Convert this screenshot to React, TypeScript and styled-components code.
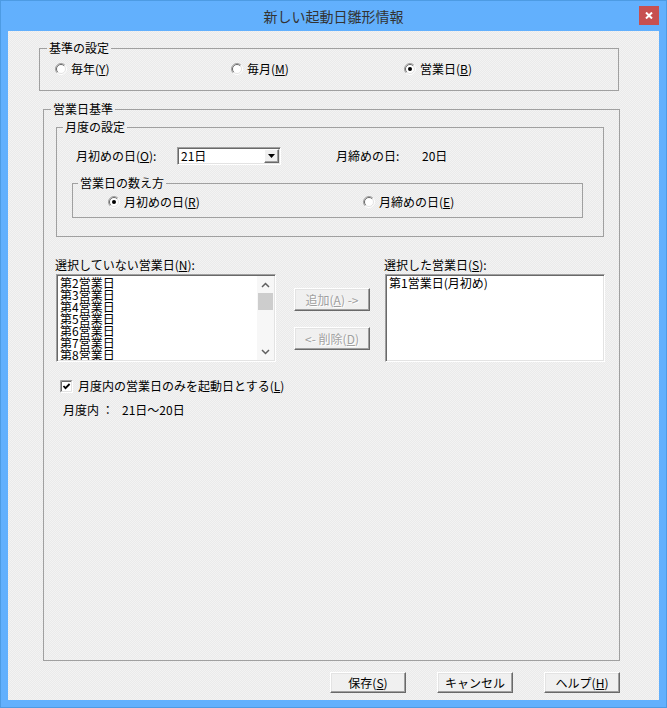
import React from 'react';
import styled, { createGlobalStyle } from 'styled-components';

const FONT = `"Noto Sans CJK JP", "Noto Sans", sans-serif`;

const GlobalStyle = createGlobalStyle`
  html, body {
    margin: 0;
    padding: 0;
    background: #ffffff;
  }
  body {
    font-family: ${FONT};
    font-size: 12px;
    color: #000000;
  }
  * {
    box-sizing: border-box;
  }
`;

const Radio = ({ checked }: { checked?: boolean }) => (
  <svg width="12" height="12" viewBox="0 0 12 12" style={{ flex: 'none' }}>
    <circle cx="6" cy="6" r="5" fill="#ffffff" />
    <path d="M2.1 9.9 A5.5 5.5 0 0 1 9.9 2.1" stroke="#a0a0a0" fill="none" />
    <path d="M9.9 2.1 A5.5 5.5 0 0 1 2.1 9.9" stroke="#ffffff" fill="none" />
    <path d="M2.8 9.2 A4.5 4.5 0 0 1 9.2 2.8" stroke="#696969" fill="none" />
    <path d="M9.2 2.8 A4.5 4.5 0 0 1 2.8 9.2" stroke="#e3e3e3" fill="none" />
    {checked && <circle cx="6" cy="6" r="2" fill="#000000" />}
  </svg>
);

const Check = () => (
  <svg width="13" height="13" viewBox="0 0 13 13" style={{ flex: 'none' }}>
    <rect x="0" y="0" width="13" height="13" fill="#ffffff" />
    <path d="M0.5 12.5 V0.5 H12.5" stroke="#a0a0a0" fill="none" />
    <path d="M12.5 0.5 V12.5 H0.5" stroke="#ffffff" fill="none" />
    <path d="M1.5 11.5 V1.5 H11.5" stroke="#696969" fill="none" />
    <path d="M11.5 1.5 V11.5 H1.5" stroke="#e3e3e3" fill="none" />
    <path d="M3.5 6 L5.5 8.2 L9.6 4" stroke="#000000" strokeWidth="1.8" fill="none" />
  </svg>
);

const Chevron = ({ up }: { up?: boolean }) => (
  <svg width="9" height="6" viewBox="0 0 9 6">
    <path
      d={up ? 'M1 5 L4.5 1.5 L8 5' : 'M1 1 L4.5 4.5 L8 1'}
      stroke="#606060"
      strokeWidth="1.5"
      fill="none"
    />
  </svg>
);

const App = () => {
  const pending = ['第2営業日', '第3営業日', '第4営業日', '第5営業日', '第6営業日', '第7営業日', '第8営業日', '第9営業日'];
  return (
    <>
      <GlobalStyle />
      <Window>
        <TitleBar>
          <Title>新しい起動日雛形情報</Title>
          <CloseButton>
            <svg width="8" height="7" viewBox="0 0 8 7">
              <path d="M1 0.5 L7 6.5 M7 0.5 L1 6.5" stroke="#ffffff" strokeWidth="2" />
            </svg>
          </CloseButton>
        </TitleBar>
        <Client>
          <Group $top={10} $left={31} $width={580} $pb={14}>
            <Legend $offset={7}>基準の設定</Legend>
            <OptionRow $top={7} $left={15}>
              <Option $width={176}>
                <Radio />
                <span>毎年(<Key>Y</Key>)</span>
              </Option>
              <Option $width={173}>
                <Radio />
                <span>毎月(<Key>M</Key>)</span>
              </Option>
              <Option>
                <Radio checked />
                <span>営業日(<Key>B</Key>)</span>
              </Option>
            </OptionRow>
          </Group>

          <Group $top={11} $left={35} $width={577} $pb={243}>
            <Legend $offset={7}>営業日基準</Legend>
            <Group $top={4} $left={12} $width={548} $pb={18}>
              <Legend $offset={6}>月度の設定</Legend>
              <FieldRow>
                <FieldLabel $width={101}>
                  月初めの日(<Key>O</Key>):
                </FieldLabel>
                <Combo>
                  <ComboText>21日</ComboText>
                  <ComboButton>
                    <svg width="7" height="4" viewBox="0 0 7 4">
                      <path d="M0 0 H7 L3.5 4 Z" fill="#000000" />
                    </svg>
                  </ComboButton>
                </Combo>
                <FieldLabel $width={86} $gap={55}>
                  月締めの日:
                </FieldLabel>
                <span>20日</span>
              </FieldRow>
              <Group $top={11} $left={15} $width={511} $pb={8}>
                <Legend $offset={5}>営業日の数え方</Legend>
                <OptionRow $top={5} $left={35}>
                  <Option $width={255}>
                    <Radio checked />
                    <span>月初めの日(<Key>R</Key>)</span>
                  </Option>
                  <Option>
                    <Radio />
                    <span>月締めの日(<Key>E</Key>)</span>
                  </Option>
                </OptionRow>
              </Group>
            </Group>

            <Lists>
              <ListColumn>
                <ListLabel>
                  選択していない営業日(<Key>N</Key>):
                </ListLabel>
                <ListBox>
                  <ListItems>
                    {pending.map((item) => (
                      <ListItem key={item}>{item}</ListItem>
                    ))}
                  </ListItems>
                  <ScrollBar>
                    <ScrollArrow>
                      <Chevron up />
                    </ScrollArrow>
                    <ScrollThumb />
                    <ScrollTrack />
                    <ScrollArrow>
                      <Chevron />
                    </ScrollArrow>
                  </ScrollBar>
                </ListBox>
              </ListColumn>
              <MoveButtons>
                <PushButton $width={76} $height={23} disabled>
                  追加(<Key>A</Key>) -&gt;
                </PushButton>
                <PushButton $width={76} $height={23} disabled>
                  &lt;- 削除(<Key>D</Key>)
                </PushButton>
              </MoveButtons>
              <ListColumn $gap={14}>
                <ListLabel>
                  選択した営業日(<Key>S</Key>):
                </ListLabel>
                <ListBox>
                  <ListItems>
                    <ListItem>第1営業日(月初め)</ListItem>
                  </ListItems>
                </ListBox>
              </ListColumn>
            </Lists>

            <CheckRow>
              <Check />
              <span>月度内の営業日のみを起動日とする(<Key>L</Key>)</span>
            </CheckRow>
            <RangeRow>
              <FieldLabel $width={59}>月度内 ：</FieldLabel>
              <span>21日〜20日</span>
            </RangeRow>
          </Group>

          <ButtonRow>
            <PushButton $width={76} $height={21}>
              保存(<Key>S</Key>)
            </PushButton>
            <PushButton $width={76} $height={21}>
              キャンセル
            </PushButton>
            <PushButton $width={76} $height={21}>
              ヘルプ(<Key>H</Key>)
            </PushButton>
          </ButtonRow>
        </Client>
      </Window>
    </>
  );
};

export default App;

const Window = styled.div`
  width: 667px;
  height: 708px;
  background: #62b0fd;
  border: 1px solid #4d9be3;
  display: flex;
  flex-direction: column;
`;

const TitleBar = styled.div`
  height: 30px;
  flex: none;
  display: grid;
  grid-template-columns: 1fr auto 1fr;
  align-items: center;
`;

const Title = styled.div`
  grid-column: 2;
  font-size: 14px;
  line-height: 16px;
  color: #333333;
  white-space: nowrap;
`;

const CloseButton = styled.div`
  grid-column: 3;
  justify-self: end;
  align-self: start;
  margin: 5px 7px 0 0;
  width: 20px;
  height: 19px;
  background: #c75050;
  display: flex;
  align-items: center;
  justify-content: center;
`;

const Client = styled.div`
  margin: 0 7px 7px 7px;
  height: 669px;
  flex: none;
  display: flex;
  flex-direction: column;
  align-items: flex-start;
  background: repeating-conic-gradient(#f3f3f3 0 25%, #eaeaea 0 50%) 0 0 / 2px 2px;
`;

const Group = styled.fieldset<{ $top: number; $left: number; $width: number; $pb: number }>`
  margin: ${(p) => p.$top}px 0 0 ${(p) => p.$left}px;
  width: ${(p) => p.$width}px;
  padding: 0 0 ${(p) => p.$pb}px 0;
  border: 1px solid #a0a0a0;
  min-width: 0;
  display: flex;
  flex-direction: column;
  align-items: flex-start;
`;

const Legend = styled.legend<{ $offset: number }>`
  margin-left: ${(p) => p.$offset}px;
  padding: 0 2px;
  font-size: 12px;
  line-height: 14px;
`;

const Key = styled.u`
  text-underline-offset: 1px;
`;

const OptionRow = styled.div<{ $top: number; $left: number }>`
  display: flex;
  align-items: center;
  height: 14px;
  margin-top: ${(p) => p.$top}px;
  padding-left: ${(p) => p.$left}px;
`;

const Option = styled.label<{ $width?: number }>`
  display: flex;
  align-items: center;
  gap: 4px;
  width: ${(p) => (p.$width ? `${p.$width}px` : 'auto')};
  line-height: 14px;
  white-space: nowrap;
`;

const FieldRow = styled.div`
  display: flex;
  align-items: center;
  height: 18px;
  margin-top: 13px;
  padding-left: 19px;
  line-height: 14px;
  white-space: nowrap;
`;

const FieldLabel = styled.span<{ $width: number; $gap?: number }>`
  width: ${(p) => p.$width}px;
  margin-left: ${(p) => p.$gap ?? 0}px;
  flex: none;
  white-space: nowrap;
`;

const Combo = styled.div`
  width: 104px;
  height: 18px;
  flex: none;
  display: flex;
  align-items: center;
  background: #ffffff;
  border: 1px solid;
  border-color: #a0a0a0 #ffffff #ffffff #a0a0a0;
  box-shadow: inset 1px 1px 0 #696969, inset -1px -1px 0 #e3e3e3;
`;

const ComboText = styled.span`
  flex: 1;
  padding-left: 3px;
  line-height: 14px;
`;

const ComboButton = styled.div`
  width: 15px;
  height: 14px;
  margin-right: 1px;
  display: flex;
  align-items: center;
  justify-content: center;
  background: #f0f0f0;
  border: 1px solid;
  border-color: #ffffff #696969 #696969 #ffffff;
  box-shadow: inset -1px -1px 0 #a0a0a0;
`;

const Lists = styled.div`
  display: flex;
  align-items: flex-start;
  margin-top: 21px;
  margin-left: 11px;
`;

const ListColumn = styled.div<{ $gap?: number }>`
  display: flex;
  flex-direction: column;
  gap: 2px;
  margin-left: ${(p) => p.$gap ?? 0}px;
`;

const ListLabel = styled.div`
  line-height: 14px;
  white-space: nowrap;
`;

const ListBox = styled.div`
  width: 220px;
  height: 88px;
  margin-left: 1px;
  display: flex;
  overflow: hidden;
  background: #ffffff;
  border: 1px solid;
  border-color: #a0a0a0 #ffffff #ffffff #a0a0a0;
  box-shadow: inset 1px 1px 0 #696969, inset -1px -1px 0 #e3e3e3;
  padding: 1px;
`;

const ListItems = styled.div`
  flex: 1;
  padding: 1px 0 0 2px;
  overflow: hidden;
`;

const ListItem = styled.div`
  font-size: 12px;
  line-height: 12px;
  white-space: nowrap;
`;

const ScrollBar = styled.div`
  width: 17px;
  flex: none;
  display: flex;
  flex-direction: column;
  background: #f7f7f7;
`;

const ScrollArrow = styled.div`
  height: 17px;
  display: flex;
  align-items: center;
  justify-content: center;
`;

const ScrollThumb = styled.div`
  height: 17px;
  margin: 0 1px;
  background: #cdcdcd;
`;

const ScrollTrack = styled.div`
  flex: 1;
`;

const MoveButtons = styled.div`
  display: flex;
  flex-direction: column;
  gap: 16px;
  margin-top: 30px;
  margin-left: 18px;
`;

const PushButton = styled.button<{ $width: number; $height: number }>`
  width: ${(p) => p.$width}px;
  height: ${(p) => p.$height}px;
  padding: 0;
  font-family: ${FONT};
  font-size: 12px;
  line-height: 14px;
  color: #000000;
  background: #f0f0f0;
  border: 1px solid;
  border-color: #ffffff #696969 #696969 #ffffff;
  box-shadow: inset -1px -1px 0 #a0a0a0, inset 1px 1px 0 #e3e3e3;
  white-space: nowrap;
  &:disabled {
    color: #a0a0a0;
    text-shadow: 1px 1px 0 #ffffff;
  }
`;

const CheckRow = styled.label`
  display: flex;
  align-items: center;
  gap: 5px;
  height: 14px;
  margin-top: 17px;
  margin-left: 16px;
  line-height: 14px;
  white-space: nowrap;
`;

const RangeRow = styled.div`
  display: flex;
  align-items: center;
  height: 14px;
  margin-top: 10px;
  margin-left: 19px;
  line-height: 14px;
  white-space: nowrap;
`;

const ButtonRow = styled.div`
  align-self: stretch;
  display: flex;
  justify-content: flex-end;
  gap: 31px;
  margin-top: 11px;
  padding-right: 39px;
`;
